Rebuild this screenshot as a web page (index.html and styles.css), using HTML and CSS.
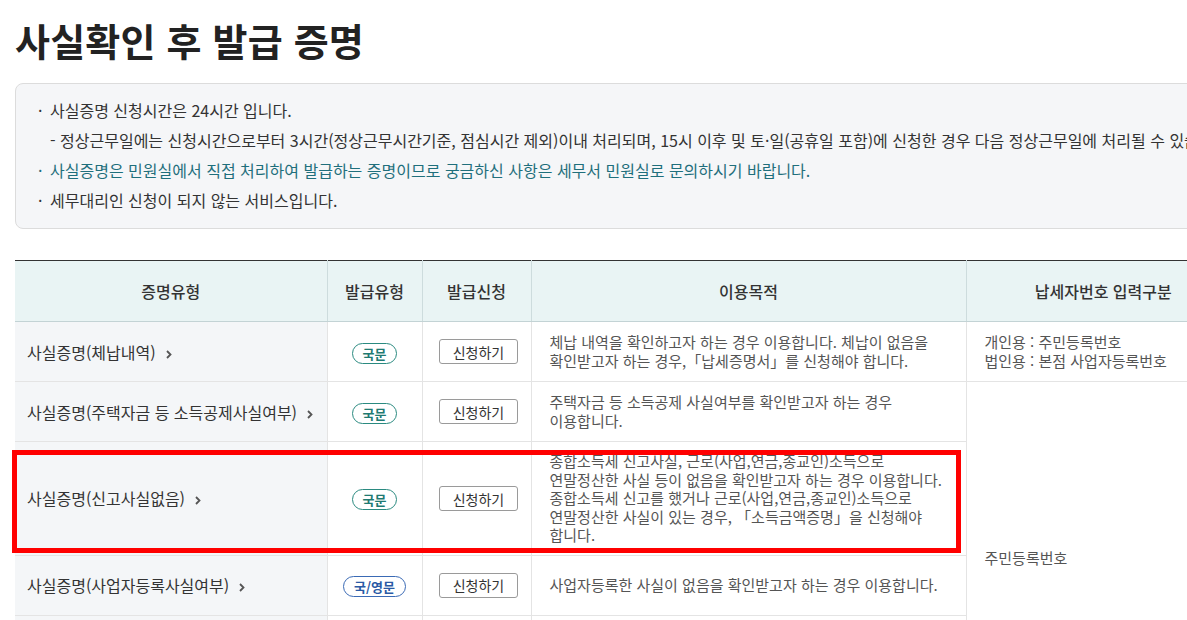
FILE: index.html
```html
<!DOCTYPE html>
<html lang="ko">
<head>
  <meta charset="UTF-8" />
  <meta name="viewport" content="width=device-width, initial-scale=1.0"/>
  <title>사실확인 후 발급 증명</title>
  <link rel="stylesheet" href="styles.css">
</head>
<body>

  <div class="page">
    <h1 class="page-title">사실확인 후 발급 증명</h1>

    <div class="notice">
      <ul>
        <li class="dot">사실증명 신청시간은 24시간 입니다.</li>
        <li class="dash">- 정상근무일에는 신청시간으로부터 3시간(정상근무시간기준, 점심시간 제외)이내 처리되며, 15시 이후 및 토·일(공휴일 포함)에 신청한 경우 다음 정상근무일에 처리될 수 있습니다.</li>
        <li class="dot point">사실증명은 민원실에서 직접 처리하여 발급하는 증명이므로 궁금하신 사항은 세무서 민원실로 문의하시기 바랍니다.</li>
        <li class="dot">세무대리인 신청이 되지 않는 서비스입니다.</li>
      </ul>
    </div>

    <div class="table-wrap">
      <table class="cert-table">
        <colgroup>
          <col style="width: 312px">
          <col style="width: 95px">
          <col style="width: 109px">
          <col style="width: 435px">
          <col style="width: 274px">
        </colgroup>
        <thead>
          <tr>
            <th>증명유형</th>
            <th>발급유형</th>
            <th>발급신청</th>
            <th>이용목적</th>
            <th>납세자번호 입력구분</th>
          </tr>
        </thead>
        <tbody>
          <tr>
            <td class="name"><a href="#">사실증명(체납내역)<svg class="arrow" viewBox="0 0 6 9"><polyline points="1,1 4.5,4.5 1,8"/></svg></a></td>
            <td class="center"><span class="badge ko">국문</span></td>
            <td class="center"><button class="btn">신청하기</button></td>
            <td class="desc">체납 내역을 확인하고자 하는 경우 이용합니다. 체납이 없음을 확인받고자 하는 경우,「납세증명서」를 신청해야 합니다.</td>
            <td class="desc">개인용 : 주민등록번호<br>법인용 : 본점 사업자등록번호</td>
          </tr>
          <tr>
            <td class="name"><a href="#">사실증명(주택자금 등 소득공제사실여부)<svg class="arrow" viewBox="0 0 6 9"><polyline points="1,1 4.5,4.5 1,8"/></svg></a></td>
            <td class="center"><span class="badge ko">국문</span></td>
            <td class="center"><button class="btn">신청하기</button></td>
            <td class="desc">주택자금 등 소득공제 사실여부를 확인받고자 하는 경우 이용합니다.</td>
            <td class="desc" rowspan="5">주민등록번호</td>
          </tr>
          <tr>
            <td class="name"><a href="#">사실증명(신고사실없음)<svg class="arrow" viewBox="0 0 6 9"><polyline points="1,1 4.5,4.5 1,8"/></svg></a></td>
            <td class="center"><span class="badge ko">국문</span></td>
            <td class="center"><button class="btn">신청하기</button></td>
            <td class="desc">종합소득세 신고사실, 근로(사업,연금,종교인)소득으로 연말정산한 사실 등이 없음을 확인받고자 하는 경우 이용합니다. 종합소득세 신고를 했거나 근로(사업,연금,종교인)소득으로 연말정산한 사실이 있는 경우, 「소득금액증명」을 신청해야 합니다.</td>
          </tr>
          <tr>
            <td class="name"><a href="#">사실증명(사업자등록사실여부)<svg class="arrow" viewBox="0 0 6 9"><polyline points="1,1 4.5,4.5 1,8"/></svg></a></td>
            <td class="center"><span class="badge both">국/영문</span></td>
            <td class="center"><button class="btn">신청하기</button></td>
            <td class="desc">사업자등록한 사실이 없음을 확인받고자 하는 경우 이용합니다.</td>
          </tr>
          <tr>
            <td class="name"><a href="#">사실증명(납세자등록사실여부)<svg class="arrow" viewBox="0 0 6 9"><polyline points="1,1 4.5,4.5 1,8"/></svg></a></td>
            <td class="center"><span class="badge ko">국문</span></td>
            <td class="center"><button class="btn">신청하기</button></td>
            <td class="desc">납세자로 등록된 사실이 없음을 확인받고자 하는 경우 이용합니다.</td>
          </tr>
          <tr>
            <td class="name"><a href="#">사실증명(모든 세목 신고사실)<svg class="arrow" viewBox="0 0 6 9"><polyline points="1,1 4.5,4.5 1,8"/></svg></a></td>
            <td class="center"><span class="badge ko">국문</span></td>
            <td class="center"><button class="btn">신청하기</button></td>
            <td class="desc">모든 세목의 신고사실을 확인받고자 하는 경우 이용합니다.</td>
          </tr>
        </tbody>
      </table>

      <!-- annotation box drawn over the third row -->
      <div class="mark"></div>
    </div>
  </div>

</body>
</html>
```

FILE: styles.css
```css
* {
  margin: 0;
  padding: 0;
  box-sizing: border-box;
}

html, body {
  overflow: hidden;
}

body {
  font-family: "Noto Sans CJK KR", "Noto Sans", sans-serif;
  background: #fff;
  color: #333;
  word-break: keep-all;
}

.page {
  width: 1260px;
  padding: 16px 20px 40px 15px;
}

.page-title {
  font-size: 38px;
  line-height: 48px;
  font-weight: 700;
  color: #222;
  letter-spacing: 0.2px;
}

/* Notice box */
.notice {
  margin-top: 19px;
  background: #f5f6f8;
  border: 1px solid #dcdcdc;
  border-radius: 8px;
  padding: 11px 20px 13px 22px;
}

.notice ul {
  list-style: none;
}

.notice li {
  font-size: 16px;
  line-height: 30px;
  color: #333;
  white-space: nowrap;
}

.notice li.dot::before {
  content: "·";
  display: inline-block;
  width: 12px;
}

.notice li.dash {
  padding-left: 12px;
}

.notice li.point {
  color: #1f6f7c;
}

/* Table */
.table-wrap {
  position: relative;
  margin-top: 31px;
}

.cert-table {
  width: 1225px;
  table-layout: fixed;
  border-collapse: collapse;
  border-top: 1px solid #333;
}

.cert-table th {
  height: 61px;
  background: #e9f4f4;
  font-size: 16px;
  font-weight: 500;
  color: #333;
  border-left: 1px solid #cddcdd;
  border-bottom: 1px solid #c3d3d5;
}

.cert-table th:first-child {
  border-left: none;
}

.cert-table td {
  height: 60px;
  border-top: 1px solid #e4e4e4;
  border-left: 1px solid #e4e4e4;
  vertical-align: middle;
}

.cert-table td:first-child {
  border-left: none;
}

.cert-table td.name {
  background: #f4f6f8;
  padding-left: 12px;
  font-size: 16px;
}

.cert-table td.name a {
  color: #333;
  text-decoration: none;
}

.arrow {
  width: 6px;
  height: 9px;
  margin-left: 10px;
  fill: none;
  stroke: #555;
  stroke-width: 1.8;
}

.cert-table td.center {
  text-align: center;
}

.cert-table td.desc {
  font-size: 15px;
  line-height: 18.5px;
  color: #555;
  padding: 10px 17px 10px 18px;
}

.badge {
  display: inline-block;
  height: 21px;
  line-height: 19px;
  padding: 0 10px;
  border: 1px solid;
  border-radius: 11px;
  font-size: 13px;
  font-weight: 700;
  background: #fff;
}

.badge.ko {
  color: #1f7a72;
  border-color: #2a8a80;
}

.badge.both {
  color: #2a5aa5;
  border-color: #3a6ab5;
}

.btn {
  width: 79px;
  height: 25px;
  background: #fff;
  border: 1px solid #9a9a9a;
  border-radius: 3px;
  font-family: inherit;
  font-size: 14px;
  color: #333;
  margin-left: 4px;
}

.mark {
  position: absolute;
  top: 190px;
  left: -3px;
  width: 949px;
  height: 103px;
  border: 5px solid #f00;
}
```
